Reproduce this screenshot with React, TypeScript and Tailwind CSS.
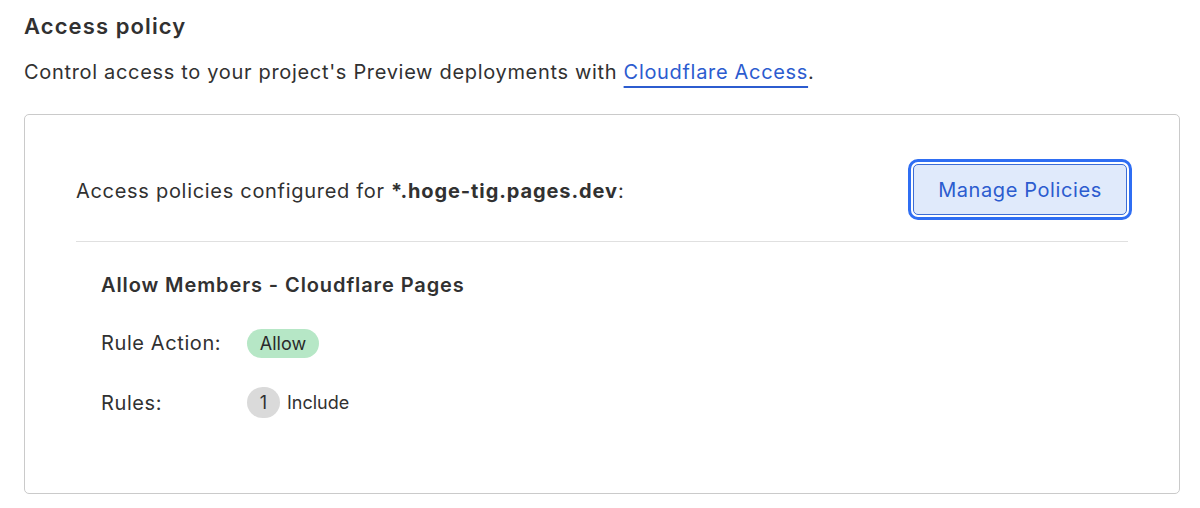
export default function App() {
  return (
    <div className="min-h-screen bg-white px-6 pt-[10px] text-[#313131] font-['Inter','Liberation_Sans',sans-serif]">
      {/* Header */}
      <h2 className="text-[22px] font-semibold leading-8 tracking-[1.1px]">Access policy</h2>
      <p className="mt-[16px] text-[20px] leading-7 tracking-[0.68px]">
        Control access to your project's Preview deployments with{' '}
        <a
          href="#"
          className="text-[#2c5ccf] underline decoration-[#2c5ccf] decoration-2 underline-offset-[7px]"
        >
          Cloudflare Access
        </a>
        .
      </p>

      {/* Card */}
      <div className="mt-[28px] h-[380px] w-[1156px] rounded-[5px] border border-[#cacaca] px-[51px] pt-[49px]">
        <div className="flex items-center justify-between">
          <p className="pt-[2px] text-[20px] leading-7 tracking-[0.7px]">
            Access policies configured for{' '}
            <span className="font-bold tracking-[0.9px]">*.hoge-tig.pages.dev</span>:
          </p>
          <button className="mr-[1px] flex h-[51px] w-[214px] items-center justify-center rounded-[5px] border border-[#3c6dd6] bg-[#e0eafb] text-[20px] tracking-[0.6px] text-[#2c5ccf] outline outline-[3px] outline-offset-[2px] outline-[#2f6ef3]">
            Manage Policies
          </button>
        </div>

        <div className="mt-[26px] h-px bg-[#e0e0e0]" />

        <div className="pl-[25px] pt-[29px]">
          <h3 className="text-[20px] font-semibold leading-7 tracking-[0.9px]">Allow Members - Cloudflare Pages</h3>

          <div className="mt-[29px] flex items-center">
            <span className="w-[146px] text-[20px] leading-[30px] tracking-[0.6px]">Rule Action:</span>
            <span className="flex h-[29px] w-[72px] items-center justify-center rounded-full bg-[#b6e7c6] text-[18px] text-[#2a2a2a]">
              Allow
            </span>
          </div>

          <div className="mt-[29px] flex items-center">
            <span className="w-[146px] text-[20px] leading-[30px] tracking-[0.6px]">Rules:</span>
            <span className="flex h-[31px] w-[33px] items-center justify-center rounded-full bg-[#dadada] text-[18px]">
              1
            </span>
            <span className="ml-[7px] text-[18px]">Include</span>
          </div>
        </div>
      </div>
    </div>
  )
}
